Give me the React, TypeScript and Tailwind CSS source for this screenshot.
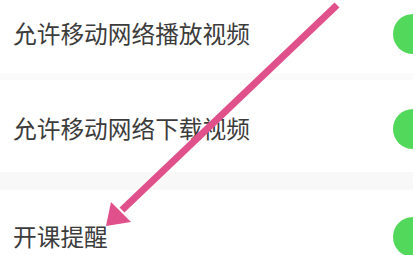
import React from "react";

const font = { fontFamily: '"Noto Sans CJK SC", "Noto Sans", sans-serif' };

function Toggle() {
  return <div className="ml-auto mr-[-40px] h-[40px] w-[60px] shrink-0 rounded-full bg-[#52d85a]" />;
}

export default function App() {
  return (
    <div
      className="relative h-[255px] w-[413px] overflow-hidden bg-white font-['Noto_Sans_CJK_SC',sans-serif]"
    >
      <div className="flex h-[73px] items-center pb-[5px] pl-[13px]">
        <span className="text-[23.7px] leading-none text-[#3c3c3c]">允许移动网络播放视频</span>
        <Toggle />
      </div>
      <div className="h-[7px] bg-[#fafafa]" />
      <div className="flex h-[92px] items-center pt-[6px] pl-[13px]">
        <span className="text-[23.7px] leading-none text-[#3c3c3c]">允许移动网络下载视频</span>
        <Toggle />
      </div>
      <div className="h-[18px] bg-[#f8f8f8]" />
      <div className="flex h-[94px] items-center pl-[13px]">
        <span className="text-[23.7px] leading-none text-[#3c3c3c]">开课提醒</span>
        <Toggle />
      </div>
      <svg
        className="pointer-events-none absolute left-0 top-0"
        width="413"
        height="255"
        viewBox="0 0 413 255"
      >
        <line x1="337" y1="5" x2="122" y2="210" stroke="#e0508a" strokeWidth="7" />
        <polygon points="106,226 111,202 131,222" fill="#e0508a" />
      </svg>
    </div>
  );
}
